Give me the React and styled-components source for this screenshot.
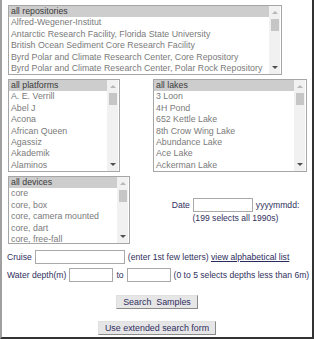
import React from 'react';
import styled, { createGlobalStyle } from 'styled-components';

const GlobalStyle = createGlobalStyle`
  html, body {
    margin: 0;
    padding: 0;
    background: #fff;
  }
  body {
    font-family: "Liberation Sans", Arial, sans-serif;
  }
`;

const repositories = [
  'all repositories',
  'Alfred-Wegener-Institut',
  'Antarctic Research Facility, Florida State University',
  'British Ocean Sediment Core Research Facility',
  'Byrd Polar and Climate Research Center, Core Repository',
  'Byrd Polar and Climate Research Center, Polar Rock Repository',
];

const platforms = [
  'all platforms',
  'A. E. Verrill',
  'Abel J',
  'Acona',
  'African Queen',
  'Agassiz',
  'Akademik',
  'Alaminos',
];

const lakes = [
  'all lakes',
  '3 Loon',
  '4H Pond',
  '652 Kettle Lake',
  '8th Crow Wing Lake',
  'Abundance Lake',
  'Ace Lake',
  'Ackerman Lake',
];

const devices = [
  'all devices',
  'core',
  'core, box',
  'core, camera mounted',
  'core, dart',
  'core, free-fall',
];

const Frame = styled.div`
  box-sizing: border-box;
  width: 314px;
  height: 339px;
  border-left: 2px solid #a0a0a0;
  border-right: 2px solid #333;
  border-bottom: 2px solid #333;
  padding: 5px 6px 0 6px;
  display: flex;
  flex-direction: column;
`;

const Box = styled.div`
  box-sizing: border-box;
  width: ${(p) => p.$w}px;
  height: ${(p) => p.$h}px;
  border: 1px solid #a6a6a6;
  background: #fff;
  display: flex;
  overflow: hidden;
`;

const Options = styled.div`
  flex: 1;
  min-width: 0;
  overflow: hidden;
`;

const Option = styled.div`
  height: 11.4px;
  line-height: 11.4px;
  padding-left: 2px;
  font-size: 8.8px;
  white-space: nowrap;
  color: ${(p) => (p.$selected ? '#3a3a3a' : '#7a7a7a')};
  background: ${(p) => (p.$selected ? '#cdcdcd' : 'transparent')};
`;

const ScrollBar = styled.div`
  width: 11px;
  margin-right: 1px;
  background: #f1f1f1;
  display: flex;
  flex-direction: column;
`;

const Arrow = styled.div`
  height: 13px;
  display: flex;
  align-items: center;
  justify-content: center;
  &::before {
    content: '';
    border-left: 3px solid transparent;
    border-right: 3px solid transparent;
    ${(p) =>
      p.$down
        ? 'border-top: 3px solid #505050;'
        : 'border-bottom: 3px solid #b8b8b8;'}
  }
`;

const Track = styled.div`
  flex: 1;
  display: flex;
  justify-content: center;
`;

const Thumb = styled.div`
  width: 8px;
  height: 12px;
  background: #c6c6c6;
`;

const ListBox = ({ items, w, h }) => (
  <Box $w={w} $h={h}>
    <Options>
      {items.map((item, i) => (
        <Option key={item} $selected={i === 0}>
          {item}
        </Option>
      ))}
    </Options>
    <ScrollBar>
      <Arrow />
      <Track>
        <Thumb />
      </Track>
      <Arrow $down />
    </ScrollBar>
  </Box>
);

const Pair = styled.div`
  display: grid;
  grid-template-columns: 145px 1fr;
  margin-top: ${(p) => p.$top}px;
`;

const DateCell = styled.div`
  display: flex;
  flex-direction: column;
  align-items: center;
  justify-content: center;
  padding-left: 12px;
  padding-top: 1px;
  gap: 1px;
`;

const Line = styled.div`
  display: flex;
  align-items: center;
  gap: ${(p) => p.$gap || 3}px;
  white-space: nowrap;
`;

const Label = styled.span`
  font-size: 8.6px;
  color: #30305e;
`;

const Link = styled.a`
  font-size: 8.6px;
  color: #2a2a5c;
  text-decoration: underline;
`;

const TextInput = styled.input`
  box-sizing: border-box;
  width: ${(p) => p.$w}px;
  height: 14px;
  margin: 0;
  padding: 0 2px;
  border: 1px solid #a9a9a9;
  background: #fff;
  font-size: 8.6px;
`;

const FieldRow = styled(Line)`
  height: 14px;
  margin-top: ${(p) => p.$top}px;
  margin-left: -1px;
`;

const ButtonRow = styled.div`
  display: flex;
  justify-content: center;
  margin-top: ${(p) => p.$top}px;
`;

const Button = styled.button`
  box-sizing: border-box;
  height: 14px;
  margin: 0;
  padding: 0 6px;
  border: 1px solid;
  border-color: #e0e0e0 #8a8a8a #8a8a8a #e0e0e0;
  background: #e6e6e6;
  font-family: "Liberation Sans", Arial, sans-serif;
  font-size: 8.9px;
  color: #2e2e60;
  white-space: pre;
  line-height: 1;
`;

export default function App() {
  return (
    <>
      <GlobalStyle />
      <Frame>
        <ListBox items={repositories} w={274} h={70} />

        <Pair $top={4}>
          <ListBox items={platforms} w={112} h={93} />
          <ListBox items={lakes} w={154} h={93} />
        </Pair>

        <Pair $top={4}>
          <ListBox items={devices} w={122} h={68} />
          <DateCell>
            <Line>
              <Label>Date</Label>
              <TextInput $w={60} />
              <Label>yyyymmdd:</Label>
            </Line>
            <Label>(199 selects all 1990s)</Label>
          </DateCell>
        </Pair>

        <FieldRow $top={6}>
          <Label>Cruise</Label>
          <TextInput $w={90} />
          <Label>
            (enter 1st few letters) <Link href="#">view alphabetical list</Link>
          </Label>
        </FieldRow>

        <FieldRow $top={4}>
          <Label>Water depth(m)</Label>
          <TextInput $w={44} />
          <Label>to</Label>
          <TextInput $w={44} />
          <Label>(0 to 5 selects depths less than 6m)</Label>
        </FieldRow>

        <ButtonRow $top={13}>
          <Button>{'Search  Samples'}</Button>
        </ButtonRow>

        <ButtonRow $top={12}>
          <Button>Use extended search form</Button>
        </ButtonRow>
      </Frame>
    </>
  );
}
